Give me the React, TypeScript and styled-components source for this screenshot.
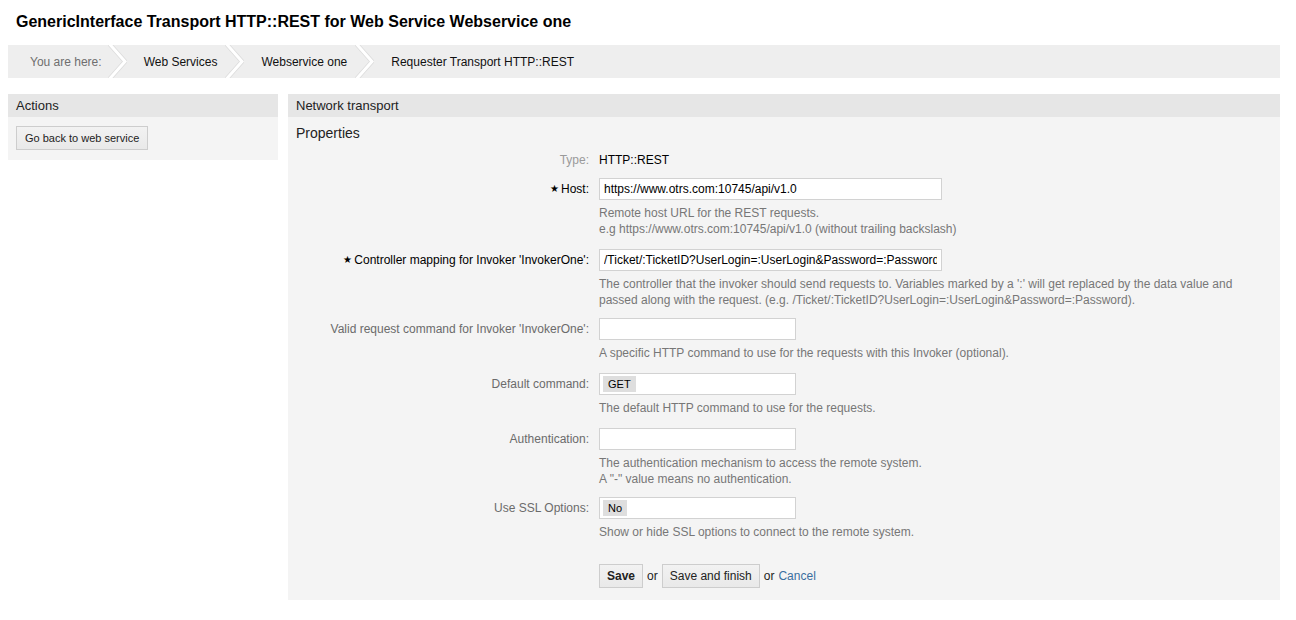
import React from "react";
import styled, { createGlobalStyle } from "styled-components";

const GlobalStyle = createGlobalStyle`
  body {
    margin: 8px;
    background: #fff;
    font-family: "Liberation Sans", Arial, Helvetica, sans-serif;
    color: #000;
  }
  * { box-sizing: border-box; }
`;

const Page = styled.div`
  padding-right: 8px;
`;

const Title = styled.h1`
  margin: 0;
  padding: 4px 8px;
  font-size: 16px;
  line-height: 20px;
  font-weight: bold;
  color: #000;
`;

const Breadcrumb = styled.ul`
  list-style: none;
  margin: 9px 0 0;
  padding: 0;
  height: 33px;
  background: #eeeeee;
  display: flex;
  align-items: stretch;
  overflow: hidden;
`;

const Crumb = styled.li<{ $muted?: boolean; $first?: boolean }>`
  display: flex;
  align-items: center;
  font-size: 12px;
  color: ${(p) => (p.$muted ? "#6f6f6f" : "#111")};
  padding-left: ${(p) => (p.$first ? "22px" : "17px")};
`;

const ChevronSvg = styled.svg<{ $m?: number }>`
  display: block;
  flex: none;
  margin-left: ${(p) => p.$m ?? 8}px;
`;

const Chevron = ({ m }: { m?: number }) => (
  <ChevronSvg $m={m} width="19" height="33" viewBox="0 0 19 33">
    <polyline points="1.5,-1 17,16.5 1.5,34" fill="none" stroke="#dcdcdc" strokeWidth="4.5" />
    <polyline points="1.5,-1 17,16.5 1.5,34" fill="none" stroke="#ffffff" strokeWidth="3" />
  </ChevronSvg>
);

const Columns = styled.div`
  display: flex;
  align-items: flex-start;
  gap: 10px;
  margin-top: 16px;
`;

const Panel = styled.section<{ $width?: string }>`
  background: #f4f4f4;
  ${(p) => (p.$width ? `width: ${p.$width}; flex: none;` : "flex: 1;")}
`;

const PanelHeader = styled.h2`
  margin: 0;
  height: 23px;
  padding: 0 8px;
  background: #e6e6e6;
  font-size: 13px;
  font-weight: normal;
  line-height: 23px;
  color: #222;
`;

const ActionsBody = styled.div`
  padding: 9px 8px 10px;
`;

const Button = styled.button<{ $bold?: boolean }>`
  height: 24px;
  padding: 0 7px;
  border: 1px solid #cdcdcd;
  background: linear-gradient(#f2f2f2, #e9e9e9);
  font-family: inherit;
  font-size: 12px;
  font-weight: ${(p) => (p.$bold ? "bold" : "normal")};
  color: #222;
  cursor: pointer;
`;

const SmallButton = styled(Button)`
  font-size: 11px;
  padding: 0 8px;
`;

const MainBody = styled.div`
  padding: 7px 8px 12px;
`;

const SubHeading = styled.h3`
  margin: 0;
  font-size: 14px;
  line-height: 18px;
  font-weight: normal;
  color: #222;
`;

const Form = styled.div`
  margin-top: 10px;
  margin-left: -8px;
`;

const Row = styled.div<{ $gap?: number }>`
  display: grid;
  grid-template-columns: 301px 1fr;
  column-gap: 10px;
  margin-bottom: ${(p) => (p.$gap ?? 11)}px;
`;

const Label = styled.div<{ $tone?: "required" | "normal" | "light"; $lh?: number }>`
  text-align: right;
  font-size: 12px;
  line-height: ${(p) => p.$lh ?? 22}px;
  color: ${(p) => (p.$tone === "required" ? "#000" : p.$tone === "light" ? "#9a9a9a" : "#6b6b6b")};
  white-space: nowrap;
`;

const Star = styled.span`
  font-size: 10px;
  margin-right: 2px;
  position: relative;
  top: -1px;
`;

const Field = styled.div`
  display: flex;
  flex-direction: column;
  align-items: flex-start;
`;

const Value = styled.div`
  font-size: 12px;
  line-height: 16px;
  color: #000;
`;

const TextInput = styled.input<{ $w: number }>`
  width: ${(p) => p.$w}px;
  height: 22px;
  border: 1px solid #d2d2d2;
  background: #fff;
  padding: 0 4px;
  font-family: inherit;
  font-size: 12px;
  color: #000;
  outline: none;
`;

const SelectBox = styled.div<{ $w: number }>`
  width: ${(p) => p.$w}px;
  height: 22px;
  border: 1px solid #d2d2d2;
  background: #fff;
  display: flex;
  align-items: center;
  padding-left: 3px;
`;

const Chip = styled.span`
  background: #dedede;
  font-size: 11px;
  line-height: 16px;
  padding: 0 5px;
  color: #000;
`;

const Help = styled.div`
  margin-top: 5px;
  font-size: 12px;
  line-height: 16px;
  color: #777;
`;

const ButtonRow = styled.div`
  display: flex;
  align-items: center;
  gap: 4px;
  margin-top: 13px;
  font-size: 12px;
  color: #222;
`;

const Link = styled.a`
  color: #3a6f9f;
  text-decoration: none;
`;

export default function App() {
  return (
    <Page>
      <GlobalStyle />
      <Title>GenericInterface Transport HTTP::REST for Web Service Webservice one</Title>
      <Breadcrumb>
        <Crumb $muted $first>You are here:<Chevron m={6} /></Crumb>
        <Crumb>Web Services<Chevron /></Crumb>
        <Crumb>Webservice one<Chevron /></Crumb>
        <Crumb>Requester Transport HTTP::REST</Crumb>
      </Breadcrumb>
      <Columns>
        <Panel $width="270px">
          <PanelHeader>Actions</PanelHeader>
          <ActionsBody>
            <SmallButton>Go back to web service</SmallButton>
          </ActionsBody>
        </Panel>
        <Panel>
          <PanelHeader>Network transport</PanelHeader>
          <MainBody>
            <SubHeading>Properties</SubHeading>
            <Form>
              <Row $gap={10}>
                <Label $tone="light" $lh={16}>Type:</Label>
                <Field><Value>HTTP::REST</Value></Field>
              </Row>
              <Row $gap={12}>
                <Label $tone="required"><Star>★</Star>Host:</Label>
                <Field>
                  <TextInput $w={343} readOnly value="https://www.otrs.com:10745/api/v1.0" />
                  <Help>
                    Remote host URL for the REST requests.<br />
                    e.g https://www.otrs.com:10745/api/v1.0 (without trailing backslash)
                  </Help>
                </Field>
              </Row>
              <Row $gap={10}>
                <Label $tone="required"><Star>★</Star>Controller mapping for Invoker 'InvokerOne':</Label>
                <Field>
                  <TextInput $w={343} readOnly value="/Ticket/:TicketID?UserLogin=:UserLogin&Password=:Password" />
                  <Help>
                    The controller that the invoker should send requests to. Variables marked by a ':' will get replaced by the data value and<br />
                    passed along with the request. (e.g. /Ticket/:TicketID?UserLogin=:UserLogin&amp;Password=:Password).
                  </Help>
                </Field>
              </Row>
              <Row $gap={12}>
                <Label>Valid request command for Invoker 'InvokerOne':</Label>
                <Field>
                  <TextInput $w={197} readOnly value="" />
                  <Help>A specific HTTP command to use for the requests with this Invoker (optional).</Help>
                </Field>
              </Row>
              <Row $gap={12}>
                <Label>Default command:</Label>
                <Field>
                  <SelectBox $w={197}><Chip>GET</Chip></SelectBox>
                  <Help>The default HTTP command to use for the requests.</Help>
                </Field>
              </Row>
              <Row $gap={10}>
                <Label>Authentication:</Label>
                <Field>
                  <TextInput $w={197} readOnly value="" />
                  <Help>
                    The authentication mechanism to access the remote system.<br />
                    A "-" value means no authentication.
                  </Help>
                </Field>
              </Row>
              <Row>
                <Label>Use SSL Options:</Label>
                <Field>
                  <SelectBox $w={197}><Chip>No</Chip></SelectBox>
                  <Help>Show or hide SSL options to connect to the remote system.</Help>
                </Field>
              </Row>
              <Row $gap={0}>
                <div />
                <ButtonRow>
                  <Button $bold>Save</Button>
                  <span>or</span>
                  <Button>Save and finish</Button>
                  <span>or</span>
                  <Link href="#">Cancel</Link>
                </ButtonRow>
              </Row>
            </Form>
          </MainBody>
        </Panel>
      </Columns>
    </Page>
  );
}
